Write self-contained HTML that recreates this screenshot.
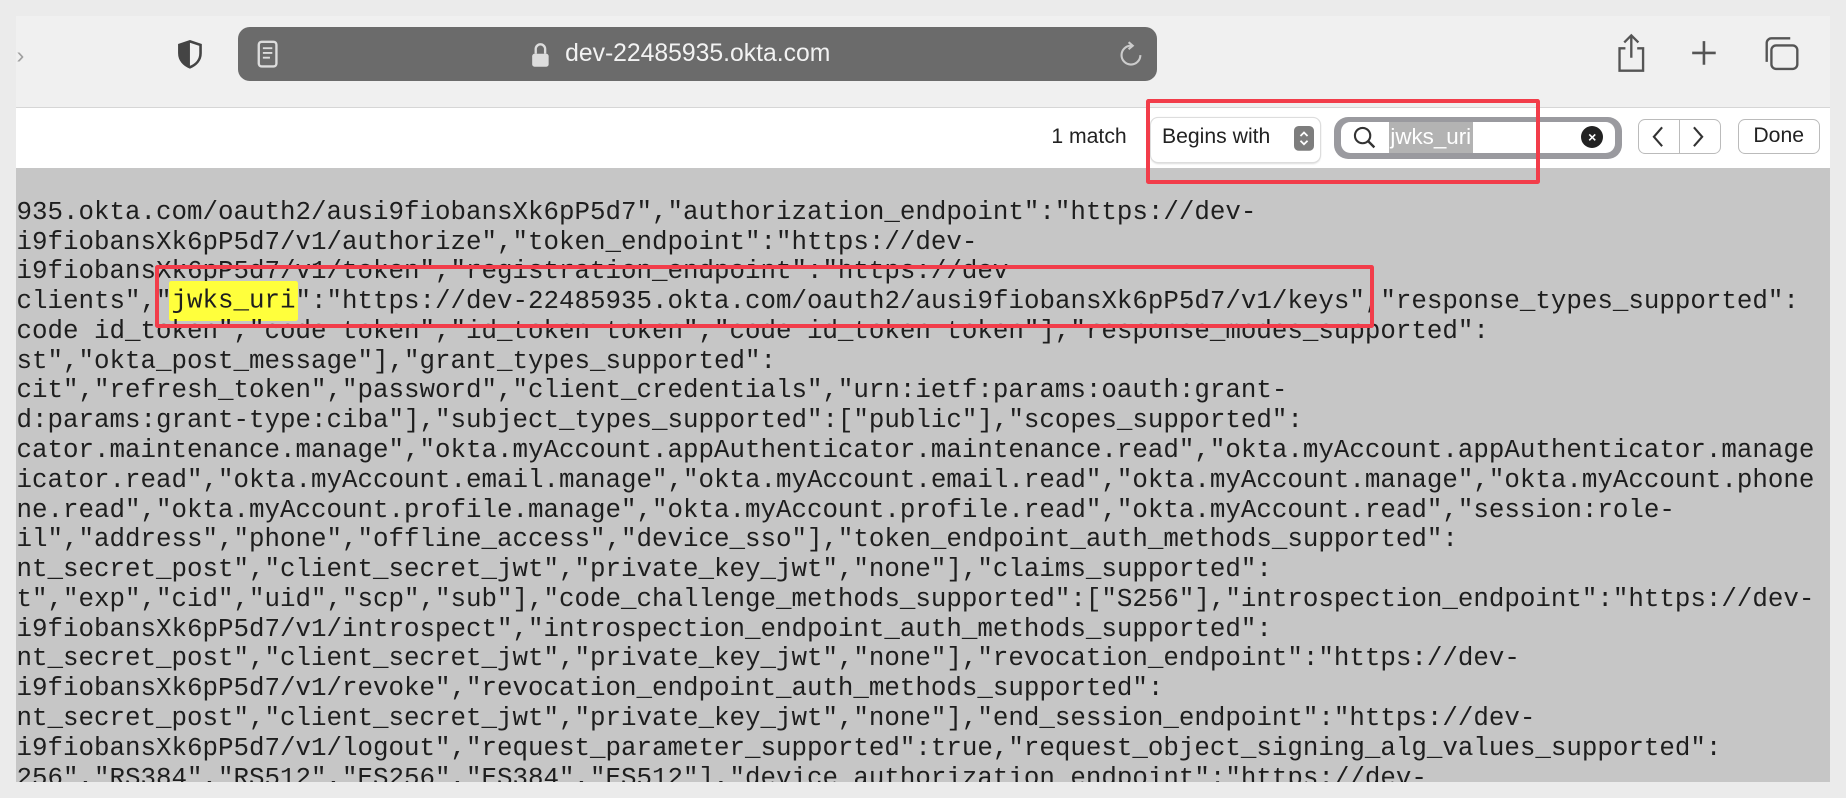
<!DOCTYPE html>
<html><head><meta charset="utf-8"><style>
html,body{margin:0;padding:0;width:1846px;height:798px;overflow:hidden;background:#ebebeb}
#w{zoom:1.17730;position:relative;width:1568px;height:678px;overflow:hidden;font-family:"Liberation Sans",sans-serif}
.abs{position:absolute}
#tb{left:14px;top:14px;width:1540px;height:77px;background:#f0f0f0;border-bottom:1px solid #d6d6d6}
#fb{left:14px;top:92px;width:1540px;height:51px;background:#fff}
#ct{left:14px;top:143px;width:1540px;height:521px;background:#c6c6c6;overflow:hidden}
#txt{position:absolute;left:0;top:25px;font-family:"Liberation Mono",monospace;font-size:21.95px;line-height:25.3px;color:#1e1e1e;white-space:pre}
.hl{background:#ffff3c;padding:4px 2px;margin:0 -2px;border-radius:2px}
.red{border:4px solid #f23d4a;box-sizing:border-box;border-radius:2px}
</style></head><body><div id="w">
<div class="abs" id="tb"></div>
<div class="abs" style="left:14px;top:36px;color:#a0a0a0;font-size:20px">›</div>
<svg class="abs" style="left:150px;top:33px" width="22" height="26" viewBox="0 0 22 26"><path d="M11 2 L20 5 V12 C20 18 16 22 11 24 C6 22 2 18 2 12 V5 Z" fill="none" stroke="#444" stroke-width="2.2"/><path d="M11 2 V24 C6 22 2 18 2 12 V5 Z" fill="#444"/></svg>
<div class="abs" style="left:202px;top:23px;width:781px;height:46px;background:#6b6b6b;border-radius:10px"></div>
<svg class="abs" style="left:218px;top:34px" width="18" height="24" viewBox="0 0 18 24"><rect x="1.5" y="1.5" width="15" height="21" rx="2.5" fill="none" stroke="#ddd" stroke-width="2"/><path d="M5 7h8M5 11h8M5 15h6" stroke="#ddd" stroke-width="1.6"/></svg>
<svg class="abs" style="left:451px;top:36px" width="16" height="22" viewBox="0 0 16 22"><path d="M4 10V6a4 4 0 0 1 8 0v4" fill="none" stroke="#ddd" stroke-width="2"/><rect x="1" y="10" width="14" height="11" rx="2" fill="#ddd"/></svg>
<div class="abs" style="left:480px;top:34px;color:#f2f2f2;font-size:21px">dev-22485935.okta.com</div>
<svg class="abs" style="left:950px;top:35px" width="22" height="24" viewBox="0 0 22 24"><path d="M11 4 A8 8 0 1 0 19 12" fill="none" stroke="#ccc" stroke-width="1.8"/><path d="M9 1 L12.5 4 L9 7" fill="none" stroke="#ccc" stroke-width="1.8"/></svg>
<svg class="abs" style="left:1373px;top:28px" width="26" height="34" viewBox="0 0 26 34"><path d="M13 2V21M7 8L13 2L19 8" fill="none" stroke="#555" stroke-width="2"/><path d="M8 13H3V32H23V13H18" fill="none" stroke="#555" stroke-width="2"/></svg>
<svg class="abs" style="left:1436px;top:34px" width="22" height="22"><path d="M11 1V21M1 11H21" stroke="#555" stroke-width="2.2"/></svg>
<svg class="abs" style="left:1497px;top:31px" width="32" height="30" viewBox="0 0 32 30"><rect x="8" y="8" width="22" height="20" rx="4" fill="none" stroke="#555" stroke-width="2"/><path d="M4 22V6a4 4 0 0 1 4-4h16" fill="none" stroke="#555" stroke-width="2"/></svg>
<div class="abs" id="fb"></div>
<div class="abs" style="left:893px;top:106px;font-size:18px;color:#222">1 match</div>
<div class="abs" style="left:978px;top:100px;width:143px;height:38px;background:#fff;border-radius:6px;box-shadow:0 0 0 1px #ddd,0 1px 2px rgba(0,0,0,.2)"></div>
<div class="abs" style="left:987px;top:106px;font-size:18px;color:#222">Begins with</div>
<svg class="abs" style="left:1099px;top:107px" width="17" height="21" viewBox="0 0 17 21"><rect width="17" height="21" rx="4" fill="#7d7d7d"/><path d="M5.5 8.5L8.5 5.5L11.5 8.5M5.5 12.5L8.5 15.5L11.5 12.5" fill="none" stroke="#fff" stroke-width="1.5"/></svg>
<div class="abs" style="left:1133px;top:99px;width:245px;height:36px;background:#9a9a9f;border-radius:12px"></div>
<div class="abs" style="left:1139px;top:104px;width:233px;height:26px;background:#fff;border-radius:8px"></div>
<svg class="abs" style="left:1148px;top:106px" width="22" height="22"><circle cx="9" cy="9" r="6.5" fill="none" stroke="#333" stroke-width="1.8"/><path d="M13.5 13.5L19 19" stroke="#333" stroke-width="2"/></svg>
<div class="abs" style="left:1180px;top:104px;height:26px;background:#b3b3b3;color:#fff;font-size:19px;line-height:26px;padding:0 2px 0 1px">jwks_uri</div>
<div class="abs" style="left:1343px;top:107px;width:19px;height:19px;background:#222;border-radius:50%;color:#fff;font-size:12px;line-height:19px;text-align:center;font-weight:bold">×</div>
<div class="abs" style="left:1391px;top:101px;width:69px;height:28px;border:1px solid #bbb;border-radius:6px"></div>
<div class="abs" style="left:1426px;top:102px;width:1px;height:28px;background:#bbb"></div>
<svg class="abs" style="left:1400px;top:106px" width="60" height="20"><path d="M12 2L5 10L12 18M39 2L46 10L39 18" fill="none" stroke="#333" stroke-width="1.8"/></svg>
<div class="abs" style="left:1476px;top:101px;width:68px;height:28px;border:1px solid #bbb;border-radius:6px;font-size:18px;line-height:28px;text-align:center;color:#222">Done</div>
<div class="abs" id="ct"><div id="txt">935.okta.com/oauth2/ausi9fiobansXk6pP5d7","authorization_endpoint":"https://dev-
i9fiobansXk6pP5d7/v1/authorize","token_endpoint":"https://dev-
i9fiobansXk6pP5d7/v1/token","registration_endpoint":"https://dev
clients","<span class="hl">jwks_uri</span>":"https://dev-22485935.okta.com/oauth2/ausi9fiobansXk6pP5d7/v1/keys","response_types_supported":
code id_token","code token","id_token token","code id_token token"],"response_modes_supported":
st","okta_post_message"],"grant_types_supported":
cit","refresh_token","password","client_credentials","urn:ietf:params:oauth:grant-
d:params:grant-type:ciba"],"subject_types_supported":["public"],"scopes_supported":
cator.maintenance.manage","okta.myAccount.appAuthenticator.maintenance.read","okta.myAccount.appAuthenticator.manage
icator.read","okta.myAccount.email.manage","okta.myAccount.email.read","okta.myAccount.manage","okta.myAccount.phone
ne.read","okta.myAccount.profile.manage","okta.myAccount.profile.read","okta.myAccount.read","session:role-
il","address","phone","offline_access","device_sso"],"token_endpoint_auth_methods_supported":
nt_secret_post","client_secret_jwt","private_key_jwt","none"],"claims_supported":
t","exp","cid","uid","scp","sub"],"code_challenge_methods_supported":["S256"],"introspection_endpoint":"https://dev-
i9fiobansXk6pP5d7/v1/introspect","introspection_endpoint_auth_methods_supported":
nt_secret_post","client_secret_jwt","private_key_jwt","none"],"revocation_endpoint":"https://dev-
i9fiobansXk6pP5d7/v1/revoke","revocation_endpoint_auth_methods_supported":
nt_secret_post","client_secret_jwt","private_key_jwt","none"],"end_session_endpoint":"https://dev-
i9fiobansXk6pP5d7/v1/logout","request_parameter_supported":true,"request_object_signing_alg_values_supported":
256","RS384","RS512","ES256","ES384","ES512"],"device_authorization_endpoint":"https://dev-</div></div>
<div class="abs red" style="left:973px;top:84px;width:335px;height:72px"></div>
<div class="abs red" style="left:132px;top:225px;width:1035px;height:54px"></div>
</div></body></html>
